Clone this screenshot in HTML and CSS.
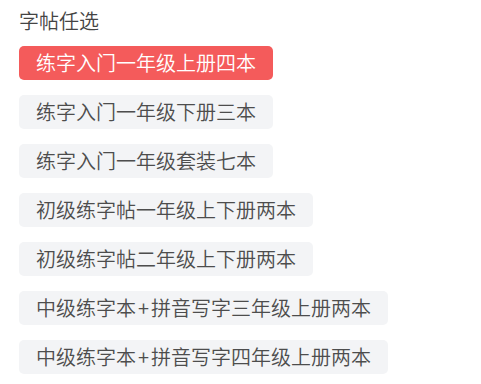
FILE: index.html
```html
<!DOCTYPE html>
<html lang="zh">
<head>
<meta charset="utf-8">
<link rel="stylesheet" href="styles.css">
</head>
<body>
<div class="panel">
  <div class="title">字帖任选</div>
  <div class="options">
    <span class="opt active">练字入门一年级上册四本</span>
    <span class="opt">练字入门一年级下册三本</span>
    <span class="opt">练字入门一年级套装七本</span>
    <span class="opt">初级练字帖一年级上下册两本</span>
    <span class="opt">初级练字帖二年级上下册两本</span>
    <span class="opt">中级练字本<span class="plus">+</span>拼音写字三年级上册两本</span>
    <span class="opt">中级练字本<span class="plus">+</span>拼音写字四年级上册两本</span>
  </div>
</div>
</body>
</html>
```
FILE: styles.css
```css
html, body {
  margin: 0;
  padding: 0;
  background: #ffffff;
}
.panel {
  padding: 9px 19px 0 19px;
  font-family: "Noto Sans CJK SC", "Noto Sans", sans-serif;
  font-weight: 350;
}
.title {
  font-size: 20px;
  line-height: 24px;
  color: #444444;
}
.options {
  margin-top: 13px;
  display: flex;
  flex-direction: column;
  align-items: flex-start;
  gap: 15px;
}
.opt {
  display: block;
  height: 34px;
  line-height: 34px;
  padding: 0 17px;
  font-size: 20px;
  color: #4d4d4d;
  background: #f3f4f6;
  border-radius: 5px;
  white-space: nowrap;
}
.plus {
  padding: 0 2px;
}
.opt.active {
  background: #f45b5b;
  color: #ffffff;
}
```
